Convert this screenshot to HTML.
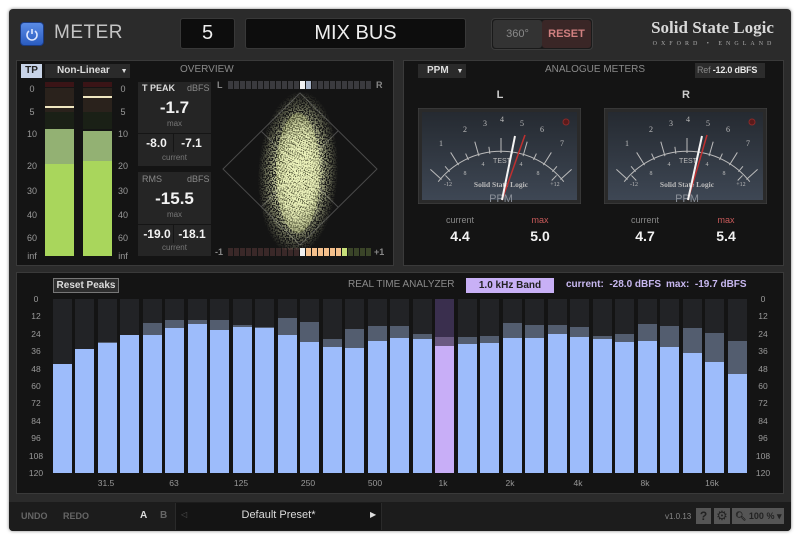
<!DOCTYPE html>
<html><head><meta charset="utf-8">
<style>
*{margin:0;padding:0;box-sizing:border-box}
body{width:800px;height:539px;background:#fff;font-family:"Liberation Sans",sans-serif;position:relative;overflow:hidden}
.a{position:absolute;white-space:nowrap}
#win{left:9px;top:9px;width:782px;height:522px;background:#2b2b2b;border-radius:4px;box-shadow:0 0 3px rgba(0,0,0,.5)}
.panel{background:#141414;border:1px solid #3a3a3a}
.lbl{color:#8a8a8a;font-size:10px}
.sc{color:#9a9a9a;font-size:9px;text-align:center;width:20px}
.box{background:#252525}
.w{color:#f2f2f2;font-weight:bold}
.bar{position:absolute;top:299px;width:19px;height:174px;background:#222326}
.bar .p{position:absolute;left:0;width:19px;background:#535d6f}
.bar .b{position:absolute;left:0;width:19px;bottom:0;background:#9dbcfb}
.yl{position:absolute;color:#9a9a9a;font-size:8.5px;width:24px;text-align:center}
.xl{position:absolute;top:478px;color:#999;font-size:8.5px;width:30px;text-align:center}
.seg{display:inline-block;width:5px;height:8px;margin-right:1px;background:#3a3a3e}
</style></head><body>
<div id="win" class="a"></div>
<!-- header -->
<div class="a" style="left:20px;top:22px;width:24px;height:24px;border-radius:4px;background:linear-gradient(#5a8be6,#2a5cc0);border:1px solid #1a3a80"></div>
<svg class="a" style="left:20px;top:22px" width="24" height="24"><path d="M9 9 A5 5 0 1 0 15 9" stroke="#dfe8ff" stroke-width="1.6" fill="none"/><line x1="12" y1="7" x2="12" y2="12" stroke="#dfe8ff" stroke-width="1.6"/></svg>
<div class="a" style="left:54px;top:22px;color:#c4c4c4;font-size:19px;letter-spacing:.5px">METER</div>
<div class="a" style="left:180px;top:18px;width:55px;height:31px;background:#0d0d0d;border-radius:3px;border:1px solid #383838;color:#eee;font-size:20px;text-align:center;line-height:29px">5</div>
<div class="a" style="left:245px;top:18px;width:221px;height:31px;background:#0d0d0d;border-radius:3px;border:1px solid #383838;color:#eee;font-size:20px;text-align:center;line-height:29px">MIX BUS</div>
<div class="a" style="left:491px;top:18px;width:102px;height:32px;background:#1a1a1a;border-radius:4px;border:1px solid #3c3c3c"></div>
<div class="a" style="left:493px;top:20px;width:49px;height:28px;background:#333;border-radius:3px;color:#8a8a8a;font-size:11px;text-align:center;line-height:28px">360°</div>
<div class="a" style="left:542px;top:20px;width:49px;height:28px;background:#3a2626;border-radius:3px;color:#d08080;font-size:11px;font-weight:bold;text-align:center;line-height:28px">RESET</div>
<div class="a" style="left:645px;top:18px;width:135px;text-align:center;color:#d8d8d8;font-family:'Liberation Serif',serif;font-size:17px;font-weight:bold">Solid State Logic</div>
<div class="a" style="left:650px;top:41px;width:128px;text-align:center;color:#aaa;font-family:'Liberation Serif',serif;font-size:6px;letter-spacing:4px">OXFORD • ENGLAND</div>

<!-- top-left panel -->
<div class="a panel" style="left:16px;top:60px;width:378px;height:206px"></div>
<div class="a" style="left:21px;top:64px;width:21px;height:14px;background:#c8d4e8;color:#222;font-size:10px;font-weight:bold;text-align:center;line-height:14px">TP</div>
<div class="a" style="left:45px;top:64px;width:85px;height:14px;background:#2a2a2a;color:#ddd;font-size:10px;font-weight:bold;line-height:14px;padding-left:12px">Non-Linear <span style="font-size:7px;margin-left:8px">▼</span></div>
<div class="a lbl" style="left:180px;top:64px">OVERVIEW</div>
<!-- meters -->
<div class="a" style="left:45px;top:82px;width:29px;height:5px;background:#3a1416"></div>
<div class="a" style="left:83px;top:82px;width:29px;height:5px;background:#3a1416"></div>
<div class="a" style="left:45px;top:88px;width:29px;height:24px;background:#2a221c"></div>
<div class="a" style="left:83px;top:88px;width:29px;height:24px;background:#2a221c"></div>
<div class="a" style="left:45px;top:112px;width:29px;height:17px;background:#1a2016"></div>
<div class="a" style="left:83px;top:112px;width:29px;height:17px;background:#1a2016"></div>
<div class="a" style="left:45px;top:129px;width:29px;height:35px;background:#93b173"></div>
<div class="a" style="left:83px;top:131px;width:29px;height:30px;background:#93b173"></div>
<div class="a" style="left:45px;top:164px;width:29px;height:92px;background:#a9d65c"></div>
<div class="a" style="left:83px;top:161px;width:29px;height:95px;background:#a9d65c"></div>
<div class="a" style="left:45px;top:106px;width:29px;height:2px;background:#efe6c0"></div>
<div class="a" style="left:83px;top:96px;width:29px;height:2px;background:#efe6c0"></div>
<div class="a sc" style="left:22px;top:84px">0</div><div class="a sc" style="left:113px;top:84px">0</div>
<div class="a sc" style="left:22px;top:107px">5</div><div class="a sc" style="left:113px;top:107px">5</div>
<div class="a sc" style="left:22px;top:129px">10</div><div class="a sc" style="left:113px;top:129px">10</div>
<div class="a sc" style="left:22px;top:161px">20</div><div class="a sc" style="left:113px;top:161px">20</div>
<div class="a sc" style="left:22px;top:186px">30</div><div class="a sc" style="left:113px;top:186px">30</div>
<div class="a sc" style="left:22px;top:210px">40</div><div class="a sc" style="left:113px;top:210px">40</div>
<div class="a sc" style="left:22px;top:233px">60</div><div class="a sc" style="left:113px;top:233px">60</div>
<div class="a sc" style="left:22px;top:251px">inf</div><div class="a sc" style="left:113px;top:251px">inf</div>
<!-- TPeak box -->
<div class="a box" style="left:138px;top:82px;width:73px;height:84px"></div>
<div class="a" style="left:138px;top:133px;width:73px;height:1px;background:#151515"></div>
<div class="a" style="left:173px;top:134px;width:1px;height:18px;background:#151515"></div>
<div class="a" style="left:142px;top:83px;color:#ddd;font-size:9px;font-weight:bold">T PEAK</div>
<div class="a" style="left:187px;top:83px;color:#888;font-size:9px">dBFS</div>
<div class="a w" style="left:138px;top:98px;width:73px;text-align:center;font-size:17px">-1.7</div>
<div class="a" style="left:138px;top:119px;width:73px;text-align:center;color:#777;font-size:8px">max</div>
<div class="a w" style="left:140px;top:136px;width:33px;text-align:center;font-size:12px">-8.0</div>
<div class="a w" style="left:175px;top:136px;width:33px;text-align:center;font-size:12px">-7.1</div>
<div class="a" style="left:138px;top:153px;width:73px;text-align:center;color:#777;font-size:8px">current</div>
<!-- RMS box -->
<div class="a box" style="left:138px;top:172px;width:73px;height:84px"></div>
<div class="a" style="left:138px;top:224px;width:73px;height:1px;background:#151515"></div>
<div class="a" style="left:173px;top:225px;width:1px;height:18px;background:#151515"></div>
<div class="a" style="left:142px;top:174px;color:#888;font-size:9px">RMS</div>
<div class="a" style="left:187px;top:174px;color:#888;font-size:9px">dBFS</div>
<div class="a w" style="left:138px;top:189px;width:73px;text-align:center;font-size:17px">-15.5</div>
<div class="a" style="left:138px;top:210px;width:73px;text-align:center;color:#777;font-size:8px">max</div>
<div class="a w" style="left:140px;top:227px;width:34px;text-align:center;font-size:12px">-19.0</div>
<div class="a w" style="left:175px;top:227px;width:34px;text-align:center;font-size:12px">-18.1</div>
<div class="a" style="left:138px;top:243px;width:73px;text-align:center;color:#777;font-size:8px">current</div>
<!-- goniometer -->
<div class="a" style="left:217px;top:80px;color:#888;font-size:9px;font-weight:bold">L</div>
<div class="a" style="left:376px;top:80px;color:#888;font-size:9px;font-weight:bold">R</div>
<div class="a" style="left:228px;top:81px;width:150px;height:8px;line-height:0">
<span class="seg"></span><span class="seg"></span><span class="seg"></span><span class="seg"></span><span class="seg"></span><span class="seg"></span><span class="seg"></span><span class="seg"></span><span class="seg"></span><span class="seg"></span><span class="seg"></span><span class="seg"></span><span class="seg" style="background:#f0f0f0"></span><span class="seg" style="background:#a8b4c8"></span><span class="seg"></span><span class="seg"></span><span class="seg"></span><span class="seg"></span><span class="seg"></span><span class="seg"></span><span class="seg"></span><span class="seg"></span><span class="seg"></span><span class="seg"></span></div>
<div class="a" style="left:215px;top:247px;color:#888;font-size:9px;font-weight:bold">-1</div>
<div class="a" style="left:374px;top:247px;color:#888;font-size:9px;font-weight:bold">+1</div>
<div class="a" style="left:228px;top:248px;width:150px;height:8px;line-height:0">
<span class="seg" style="background:#3a2828"></span><span class="seg" style="background:#3a2828"></span><span class="seg" style="background:#3a2828"></span><span class="seg" style="background:#3a2828"></span><span class="seg" style="background:#3a2828"></span><span class="seg" style="background:#3a2828"></span><span class="seg" style="background:#3a2828"></span><span class="seg" style="background:#3a2828"></span><span class="seg" style="background:#3a2828"></span><span class="seg" style="background:#3a2828"></span><span class="seg" style="background:#3a2828"></span><span class="seg" style="background:#3a2828"></span><span class="seg" style="background:#f0f0f0"></span><span class="seg" style="background:#f4c08c"></span><span class="seg" style="background:#f4c08c"></span><span class="seg" style="background:#f4c08c"></span><span class="seg" style="background:#f4c08c"></span><span class="seg" style="background:#f4c08c"></span><span class="seg" style="background:#f4c08c"></span><span class="seg" style="background:#c8e07a"></span><span class="seg" style="background:#3a4428"></span><span class="seg" style="background:#3a4428"></span><span class="seg" style="background:#3a4428"></span><span class="seg" style="background:#3a4428"></span></div>
<svg class="a" style="left:218px;top:90px" width="165" height="160">
<defs>
<filter id="spk" x="0" y="0" width="100%" height="100%">
<feTurbulence type="fractalNoise" baseFrequency="0.7" numOctaves="1" seed="3"/>
<feColorMatrix type="matrix" values="0 0 0 0 0.85  0 0 0 0 0.9  0 0 0 0 0.5  0 0 0 10 -4.4"/>
</filter>
<radialGradient id="eg"><stop offset="0" stop-color="#fff"/><stop offset=".5" stop-color="#eee"/><stop offset="1" stop-color="#000"/></radialGradient>
<mask id="em"><ellipse cx="80" cy="83" rx="40" ry="82" fill="url(#eg)" transform="rotate(3 80 83)"/></mask>
<mask id="em2"><ellipse cx="80" cy="85" rx="26" ry="62" fill="url(#eg)" transform="rotate(3 80 83)"/></mask>
</defs>
<g stroke="#4a4a4a" stroke-width="1" fill="none">
<path d="M82 3 L159 79 L82 155 L5 79 Z"/>
<path d="M43 41 L120 117 M120 41 L43 117"/>
</g>
<ellipse cx="80" cy="83" rx="22" ry="60" fill="#b8c070" opacity=".35"/>
<rect x="0" y="0" width="165" height="160" filter="url(#spk)" mask="url(#em)"/>
<rect x="0" y="0" width="165" height="160" filter="url(#spk)" mask="url(#em2)" transform="translate(2 1)"/>
</svg>

<!-- top-right panel -->
<div class="a panel" style="left:403px;top:60px;width:381px;height:206px"></div>
<div class="a" style="left:418px;top:64px;width:48px;height:14px;background:#2a2a2a;color:#ddd;font-size:10px;font-weight:bold;line-height:14px;padding-left:9px">PPM <span style="font-size:7px;margin-left:5px">▼</span></div>
<div class="a lbl" style="left:545px;top:64px">ANALOGUE METERS</div>
<div class="a" style="left:695px;top:63px;width:70px;height:15px;background:#2c2c2c;font-size:9px;line-height:15px;padding-left:2px;letter-spacing:-.2px"><span style="color:#888">Ref</span> <span style="color:#e8e8e8;font-weight:bold">-12.0 dBFS</span></div>
<div class="a w" style="left:490px;top:89px;width:20px;text-align:center;font-size:11px;color:#ccc">L</div>
<div class="a w" style="left:676px;top:89px;width:20px;text-align:center;font-size:11px;color:#ccc">R</div>

<!-- meter L -->
<svg class="a" style="left:418px;top:108px" width="163" height="96">
<defs><linearGradient id="mf" x1="0" y1="0" x2="0" y2="1"><stop offset="0" stop-color="#252a31"/><stop offset="1" stop-color="#3e4754"/></linearGradient></defs>
<rect x="0" y="0" width="163" height="96" fill="#2a2a2a" stroke="#444"/>
<rect x="4" y="4" width="155" height="88" fill="url(#mf)"/>
<circle cx="148" cy="14" r="3" fill="#5a1a1a" stroke="#8a2a2a"/>
<g stroke="#bbb" stroke-width="1" fill="none">
<path d="M20.2 73.7 A80 80 0 0 1 145.8 73.7"/>
<line x1="83" y1="45" x2="83" y2="30" transform="rotate(-48 83 125)"/>
<line x1="83" y1="45" x2="83" y2="30" transform="rotate(-32 83 125)"/>
<line x1="83" y1="45" x2="83" y2="30" transform="rotate(-16 83 125)"/>
<line x1="83" y1="45" x2="83" y2="30" transform="rotate(0 83 125)"/>
<line x1="83" y1="45" x2="83" y2="30" transform="rotate(16 83 125)"/>
<line x1="83" y1="45" x2="83" y2="30" transform="rotate(32 83 125)"/>
<line x1="83" y1="45" x2="83" y2="30" transform="rotate(48 83 125)"/>
<line x1="83" y1="45" x2="83" y2="38" transform="rotate(-40 83 125)"/>
<line x1="83" y1="45" x2="83" y2="38" transform="rotate(-24 83 125)"/>
<line x1="83" y1="45" x2="83" y2="38" transform="rotate(-8 83 125)"/>
<line x1="83" y1="45" x2="83" y2="38" transform="rotate(8 83 125)"/>
<line x1="83" y1="45" x2="83" y2="38" transform="rotate(24 83 125)"/>
<line x1="83" y1="45" x2="83" y2="38" transform="rotate(40 83 125)"/>
<line x1="83" y1="45" x2="83" y2="52" transform="rotate(-44 83 125)"/>
<line x1="83" y1="45" x2="83" y2="52" transform="rotate(44 83 125)"/>
</g>
<g fill="#bbb" font-family="Liberation Serif,serif" font-size="8" text-anchor="middle">
<text x="23" y="38">1</text><text x="47" y="24">2</text><text x="67" y="18">3</text><text x="84" y="14">4</text><text x="104" y="18">5</text><text x="124" y="24">6</text><text x="144" y="38">7</text>
<text x="30" y="78" font-size="6">-12</text><text x="47" y="67" font-size="6">8</text><text x="65" y="58" font-size="6">4</text><text x="84" y="55" font-size="7" font-family="Liberation Sans,sans-serif">TEST</text><text x="103" y="58" font-size="6">4</text><text x="120" y="67" font-size="6">8</text><text x="137" y="78" font-size="6">+12</text>
<text x="83" y="79" font-size="7.5" font-weight="bold">Solid State Logic</text>
<text x="83" y="94" font-size="11" font-family="Liberation Sans,sans-serif" fill="#8a8f98">PPM</text>
</g>
<line x1="84" y1="92" x2="107" y2="27" stroke="#c03030" stroke-width="1.5"/>
<line x1="84" y1="92" x2="97" y2="28" stroke="#f4f4f4" stroke-width="2"/>
</svg>
<!-- meter R -->
<svg class="a" style="left:604px;top:108px" width="163" height="96">
<rect x="0" y="0" width="163" height="96" fill="#2a2a2a" stroke="#444"/>
<rect x="4" y="4" width="155" height="88" fill="url(#mf)"/>
<circle cx="148" cy="14" r="3" fill="#5a1a1a" stroke="#8a2a2a"/>
<g stroke="#bbb" stroke-width="1" fill="none">
<path d="M20.2 73.7 A80 80 0 0 1 145.8 73.7"/>
<line x1="83" y1="45" x2="83" y2="30" transform="rotate(-48 83 125)"/>
<line x1="83" y1="45" x2="83" y2="30" transform="rotate(-32 83 125)"/>
<line x1="83" y1="45" x2="83" y2="30" transform="rotate(-16 83 125)"/>
<line x1="83" y1="45" x2="83" y2="30" transform="rotate(0 83 125)"/>
<line x1="83" y1="45" x2="83" y2="30" transform="rotate(16 83 125)"/>
<line x1="83" y1="45" x2="83" y2="30" transform="rotate(32 83 125)"/>
<line x1="83" y1="45" x2="83" y2="30" transform="rotate(48 83 125)"/>
<line x1="83" y1="45" x2="83" y2="38" transform="rotate(-40 83 125)"/>
<line x1="83" y1="45" x2="83" y2="38" transform="rotate(-24 83 125)"/>
<line x1="83" y1="45" x2="83" y2="38" transform="rotate(-8 83 125)"/>
<line x1="83" y1="45" x2="83" y2="38" transform="rotate(8 83 125)"/>
<line x1="83" y1="45" x2="83" y2="38" transform="rotate(24 83 125)"/>
<line x1="83" y1="45" x2="83" y2="38" transform="rotate(40 83 125)"/>
<line x1="83" y1="45" x2="83" y2="52" transform="rotate(-44 83 125)"/>
<line x1="83" y1="45" x2="83" y2="52" transform="rotate(44 83 125)"/>
</g>
<g fill="#bbb" font-family="Liberation Serif,serif" font-size="8" text-anchor="middle">
<text x="23" y="38">1</text><text x="47" y="24">2</text><text x="67" y="18">3</text><text x="84" y="14">4</text><text x="104" y="18">5</text><text x="124" y="24">6</text><text x="144" y="38">7</text>
<text x="30" y="78" font-size="6">-12</text><text x="47" y="67" font-size="6">8</text><text x="65" y="58" font-size="6">4</text><text x="84" y="55" font-size="7" font-family="Liberation Sans,sans-serif">TEST</text><text x="103" y="58" font-size="6">4</text><text x="120" y="67" font-size="6">8</text><text x="137" y="78" font-size="6">+12</text>
<text x="83" y="79" font-size="7.5" font-weight="bold">Solid State Logic</text>
<text x="83" y="94" font-size="11" font-family="Liberation Sans,sans-serif" fill="#8a8f98">PPM</text>
</g>
<line x1="84" y1="92" x2="103" y2="27" stroke="#c03030" stroke-width="1.5"/>
<line x1="84" y1="92" x2="98" y2="28" stroke="#f4f4f4" stroke-width="2"/>
</svg>
<div class="a" style="left:628px;top:215px;width:34px;text-align:center;color:#888;font-size:9px">current</div>
<div class="a" style="left:443px;top:215px;width:34px;text-align:center;color:#888;font-size:9px">current</div>
<div class="a" style="left:523px;top:215px;width:34px;text-align:center;color:#c85a5a;font-size:9px">max</div>
<div class="a" style="left:709px;top:215px;width:34px;text-align:center;color:#c85a5a;font-size:9px">max</div>
<div class="a w" style="left:438px;top:228px;width:44px;text-align:center;font-size:14px">4.4</div>
<div class="a w" style="left:518px;top:228px;width:44px;text-align:center;font-size:14px">5.0</div>
<div class="a w" style="left:623px;top:228px;width:44px;text-align:center;font-size:14px">4.7</div>
<div class="a w" style="left:704px;top:228px;width:44px;text-align:center;font-size:14px">5.4</div>

<!-- RTA panel -->
<div class="a panel" style="left:16px;top:272px;width:768px;height:222px"></div>
<div class="a" style="left:53px;top:278px;width:66px;height:15px;background:#2e2e2e;border:1px solid #777;color:#ddd;font-size:10px;font-weight:bold;text-align:center;line-height:13px">Reset Peaks</div>
<div class="a lbl" style="left:348px;top:279px">REAL TIME ANALYZER</div>
<div class="a" style="left:466px;top:278px;width:88px;height:15px;background:#c8b0f6;color:#222;font-size:10px;font-weight:bold;text-align:center;line-height:15px">1.0 kHz Band</div>
<div class="a" style="left:566px;top:279px;color:#c8b8f0;font-size:10px;font-weight:bold">current:&nbsp; -28.0 dBFS</div>
<div class="a" style="left:666px;top:279px;color:#c8b8f0;font-size:10px;font-weight:bold">max:&nbsp; -19.7 dBFS</div>

<div class="yl" style="left:24px;top:294px">0</div><div class="yl" style="left:751px;top:294px">0</div>
<div class="yl" style="left:24px;top:311px">12</div><div class="yl" style="left:751px;top:311px">12</div>
<div class="yl" style="left:24px;top:329px">24</div><div class="yl" style="left:751px;top:329px">24</div>
<div class="yl" style="left:24px;top:346px">36</div><div class="yl" style="left:751px;top:346px">36</div>
<div class="yl" style="left:24px;top:364px">48</div><div class="yl" style="left:751px;top:364px">48</div>
<div class="yl" style="left:24px;top:381px">60</div><div class="yl" style="left:751px;top:381px">60</div>
<div class="yl" style="left:24px;top:398px">72</div><div class="yl" style="left:751px;top:398px">72</div>
<div class="yl" style="left:24px;top:416px">84</div><div class="yl" style="left:751px;top:416px">84</div>
<div class="yl" style="left:24px;top:433px">96</div><div class="yl" style="left:751px;top:433px">96</div>
<div class="yl" style="left:24px;top:451px">108</div><div class="yl" style="left:751px;top:451px">108</div>
<div class="yl" style="left:24px;top:468px">120</div><div class="yl" style="left:751px;top:468px">120</div>

<div class="bar" style="left:53px"><div class="b" style="top:65px"></div></div>
<div class="bar" style="left:75px"><div class="b" style="top:50px"></div></div>
<div class="bar" style="left:98px"><div class="p" style="top:43px;height:1px"></div><div class="b" style="top:44px"></div></div>
<div class="bar" style="left:120px"><div class="b" style="top:36px"></div></div>
<div class="bar" style="left:143px"><div class="p" style="top:24px;height:12px"></div><div class="b" style="top:36px"></div></div>
<div class="bar" style="left:165px"><div class="p" style="top:21px;height:8px"></div><div class="b" style="top:29px"></div></div>
<div class="bar" style="left:188px"><div class="p" style="top:21px;height:4px"></div><div class="b" style="top:25px"></div></div>
<div class="bar" style="left:210px"><div class="p" style="top:21px;height:10px"></div><div class="b" style="top:31px"></div></div>
<div class="bar" style="left:233px"><div class="p" style="top:26px;height:2px"></div><div class="b" style="top:28px"></div></div>
<div class="bar" style="left:255px"><div class="p" style="top:28px;height:1px"></div><div class="b" style="top:29px"></div></div>
<div class="bar" style="left:278px"><div class="p" style="top:19px;height:17px"></div><div class="b" style="top:36px"></div></div>
<div class="bar" style="left:300px"><div class="p" style="top:23px;height:20px"></div><div class="b" style="top:43px"></div></div>
<div class="bar" style="left:323px"><div class="p" style="top:40px;height:8px"></div><div class="b" style="top:48px"></div></div>
<div class="bar" style="left:345px"><div class="p" style="top:30px;height:19px"></div><div class="b" style="top:49px"></div></div>
<div class="bar" style="left:368px"><div class="p" style="top:27px;height:15px"></div><div class="b" style="top:42px"></div></div>
<div class="bar" style="left:390px"><div class="p" style="top:27px;height:12px"></div><div class="b" style="top:39px"></div></div>
<div class="bar" style="left:413px"><div class="p" style="top:35px;height:5px"></div><div class="b" style="top:40px"></div></div>
<div class="bar" style="left:435px;background:#3a2f4e"><div class="p" style="top:38px;height:9px;background:#6a5a82"></div><div class="b" style="top:47px;background:#c8aef7"></div></div>
<div class="bar" style="left:458px"><div class="p" style="top:38px;height:7px"></div><div class="b" style="top:45px"></div></div>
<div class="bar" style="left:480px"><div class="p" style="top:37px;height:7px"></div><div class="b" style="top:44px"></div></div>
<div class="bar" style="left:503px"><div class="p" style="top:24px;height:15px"></div><div class="b" style="top:39px"></div></div>
<div class="bar" style="left:525px"><div class="p" style="top:26px;height:13px"></div><div class="b" style="top:39px"></div></div>
<div class="bar" style="left:548px"><div class="p" style="top:26px;height:9px"></div><div class="b" style="top:35px"></div></div>
<div class="bar" style="left:570px"><div class="p" style="top:28px;height:10px"></div><div class="b" style="top:38px"></div></div>
<div class="bar" style="left:593px"><div class="p" style="top:37px;height:3px"></div><div class="b" style="top:40px"></div></div>
<div class="bar" style="left:615px"><div class="p" style="top:35px;height:8px"></div><div class="b" style="top:43px"></div></div>
<div class="bar" style="left:638px"><div class="p" style="top:25px;height:17px"></div><div class="b" style="top:42px"></div></div>
<div class="bar" style="left:660px"><div class="p" style="top:27px;height:21px"></div><div class="b" style="top:48px"></div></div>
<div class="bar" style="left:683px"><div class="p" style="top:29px;height:25px"></div><div class="b" style="top:54px"></div></div>
<div class="bar" style="left:705px"><div class="p" style="top:34px;height:29px"></div><div class="b" style="top:63px"></div></div>
<div class="bar" style="left:728px"><div class="p" style="top:42px;height:33px"></div><div class="b" style="top:75px"></div></div>

<div class="xl" style="left:91px">31.5</div>
<div class="xl" style="left:159px">63</div>
<div class="xl" style="left:226px">125</div>
<div class="xl" style="left:293px">250</div>
<div class="xl" style="left:360px">500</div>
<div class="xl" style="left:428px">1k</div>
<div class="xl" style="left:495px">2k</div>
<div class="xl" style="left:563px">4k</div>
<div class="xl" style="left:630px">8k</div>
<div class="xl" style="left:697px">16k</div>

<!-- footer -->
<div class="a" style="left:9px;top:502px;width:782px;height:29px;background:#1c1c1c;border-radius:0 0 4px 4px"></div>
<div class="a" style="left:21px;top:511px;color:#666;font-size:9px;font-weight:bold">UNDO</div>
<div class="a" style="left:63px;top:511px;color:#666;font-size:9px;font-weight:bold">REDO</div>
<div class="a" style="left:140px;top:510px;color:#ddd;font-size:10px;font-weight:bold">A</div>
<div class="a" style="left:160px;top:510px;color:#666;font-size:10px;font-weight:bold">B</div>
<div class="a" style="left:175px;top:503px;width:207px;height:27px;background:#141414;border-left:1px solid #2a2a2a;border-right:1px solid #2a2a2a"></div>
<div class="a" style="left:181px;top:510px;color:#555;font-size:8px">◁</div>
<div class="a" style="left:175px;top:509px;width:207px;text-align:center;color:#ddd;font-size:11px">Default Preset*</div>
<div class="a" style="left:370px;top:510px;color:#ddd;font-size:8px">▶</div>
<div class="a" style="left:665px;top:512px;color:#888;font-size:8px">v1.0.13</div>
<div class="a" style="left:696px;top:508px;width:15px;height:16px;background:#555;color:#222;font-size:12px;font-weight:bold;text-align:center;line-height:16px">?</div>
<div class="a" style="left:714px;top:508px;width:16px;height:16px;background:#555;color:#222;font-size:13px;text-align:center;line-height:16px">⚙</div>
<div class="a" style="left:732px;top:508px;width:52px;height:16px;background:#555;color:#222;font-size:9px;font-weight:bold;line-height:16px;padding-left:3px">&#x1F50D;&#xFE0E; 100 % ▾</div>
</body></html>
